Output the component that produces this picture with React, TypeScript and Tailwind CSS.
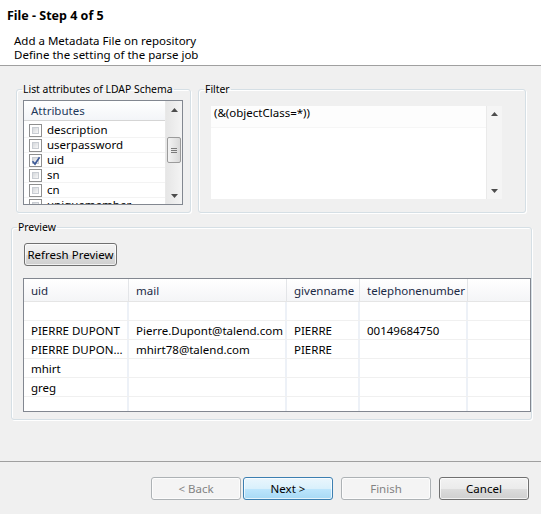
import React from 'react'

const attributes = [
  { name: 'description', checked: false },
  { name: 'userpassword', checked: false },
  { name: 'uid', checked: true },
  { name: 'sn', checked: false },
  { name: 'cn', checked: false },
  { name: 'uniquemember', checked: false },
]

const columns = [
  { title: 'uid', w: 'w-[105px]' },
  { title: 'mail', w: 'w-[158px]' },
  { title: 'givenname', w: 'w-[73px]' },
  { title: 'telephonenumber', w: 'w-[108px]' },
]

const rows = [
  ['', '', '', ''],
  ['PIERRE DUPONT', 'Pierre.Dupont@talend.com', 'PIERRE', '00149684750'],
  ['PIERRE DUPON...', 'mhirt78@talend.com', 'PIERRE', ''],
  ['mhirt', '', '', ''],
  ['greg', '', '', ''],
  ['', '', '', ''],
]

function Arrow({ down }: { down?: boolean }) {
  return (
    <svg width="7" height="4" viewBox="0 0 7 4">
      <path d={down ? 'M0 0H7L3.5 4Z' : 'M0 4H7L3.5 0Z'} fill="#4d4d4d" />
    </svg>
  )
}

function Checkbox({ checked }: { checked: boolean }) {
  return (
    <span className="relative w-[13px] h-[13px] border border-[#8f8f8f] bg-white p-[2px] shrink-0">
      <span className="block w-full h-full border border-[#c8ccd2] bg-linear-to-br from-[#d4d7db] to-[#f7f7f7]" />
      {checked && (
        <svg className="absolute left-[1px] top-[1px]" width="10" height="10" viewBox="0 0 10 10">
          <path d="M1.5 5.2L4 8L8.6 1.2" fill="none" stroke="#3d5a98" strokeWidth="1.7" />
        </svg>
      )}
    </span>
  )
}

function Group({ label, className, children }: { label: string, className: string, children: React.ReactNode }) {
  return (
    <fieldset className={`border border-[#d5dfe5] rounded-[3px] shadow-[inset_1px_1px_0_#fff,1px_1px_0_#fff] ${className}`}>
      <legend className="ml-[5px] px-[1px] leading-[15px] text-[10.4px]">{label}</legend>
      {children}
    </fieldset>
  )
}

const winButton = 'h-[23px] border rounded-[3px] flex items-center justify-center shadow-[inset_0_0_0_1px_rgba(255,255,255,0.7)]'
const normalButton = `${winButton} border-[#707070] bg-[linear-gradient(#f2f2f2_0%,#ebebeb_50%,#dddddd_50%,#cfcfcf_100%)]`
const disabledButton = `${winButton} border-[#adb2b5] bg-[#f4f4f4] text-[#838383]`
const defaultButton = `${winButton} border-[#3c7fb1] bg-[linear-gradient(#eaf6fd_0%,#d9f0fc_50%,#bee6fd_50%,#a7d9f5_100%)]`

export default function App() {
  return (
    <div className="w-[541px] h-[514px] bg-[#f0f0f0] flex flex-col overflow-hidden text-[11.5px] leading-[15px] text-black font-['Noto_Sans',sans-serif]">
      {/* wizard header */}
      <div className="h-[66px] shrink-0 bg-white border-b border-[#a0a0a0] pl-[7px] pt-[8px]">
        <div className="font-bold text-[12.5px] leading-[16px]">File - Step 4 of 5</div>
        <div className="pl-[7px] mt-[10px] leading-[14px]">
          <div>Add a Metadata File on repository</div>
          <div>Define the setting of the parse job</div>
        </div>
      </div>

      <div className="flex-1 flex flex-col pl-[11px]">
        <div className="mt-[16px] flex">
          <Group label="List attributes of LDAP Schema" className="ml-[5px] w-[175px] h-[131px]">
            <div className="ml-[6px] mt-[3px] w-[160px] h-[105px] border border-[#828790] bg-white flex overflow-hidden">
              <div className="flex-1 flex flex-col min-w-0">
                <div className="h-[20px] shrink-0 flex items-center pl-[7px] border-b border-[#d5d5d5] bg-linear-to-b from-white to-[#f3f5f8] text-[#1e395b]">
                  Attributes
                </div>
                <div className="pt-[2px] flex flex-col">
                  {attributes.map(a => (
                    <div key={a.name} className="h-[15px] shrink-0 flex items-center gap-[5px] pl-[5px] border-b border-[#f3f3f3]">
                      <Checkbox checked={a.checked} />
                      <span className="leading-[14px]">{a.name}</span>
                    </div>
                  ))}
                </div>
              </div>
              <div className="w-[17px] shrink-0 flex flex-col items-center bg-linear-to-r from-[#e6e6e6] to-[#f4f4f4] border-l border-[#e9e9e9]">
                <div className="h-[17px] flex items-center justify-center"><Arrow /></div>
                <div className="h-[19px]" />
                <div className="w-[14px] h-[26px] border border-[#9b9b9b] rounded-[2px] bg-linear-to-r from-[#f3f3f3] to-[#d9d9d9] flex flex-col items-center justify-center gap-[1px]">
                  <span className="w-[6px] h-px bg-[#7a7a7a]" />
                  <span className="w-[6px] h-px bg-[#7a7a7a]" />
                  <span className="w-[6px] h-px bg-[#7a7a7a]" />
                </div>
                <div className="flex-1" />
                <div className="h-[17px] flex items-center justify-center"><Arrow down /></div>
              </div>
            </div>
          </Group>

          <Group label="Filter" className="ml-[7px] w-[328px] h-[131px]">
            <div className="ml-[11px] mt-[8px] w-[293px] h-[95px] bg-white border border-[#f0f0f0] flex">
              <div className="flex-1">
                <div className="h-[22px] pl-[3px] leading-[14px] border-b border-[#f6f6f6] bg-[#fdfdfd]">(&amp;(objectClass=*))</div>
              </div>
              <div className="w-[16px] flex flex-col items-center justify-between py-[6px] bg-[#f5f5f5] border-l border-[#eaeaea]">
                <Arrow />
                <Arrow down />
              </div>
            </div>
          </Group>
        </div>

        <Group label="Preview" className="mt-[7px] w-[520px] h-[200px]">
          <button className={`${normalButton} ml-[12px] mt-[8px] w-[93px]`}>Refresh Preview</button>
          <div className="ml-[11px] mt-[12px] w-[508px] h-[134px] border border-[#828790] bg-white overflow-hidden">
            <div className="h-[23px] flex border-b border-[#e5e5e5] bg-linear-to-b from-white to-[#f4f5f7]">
              {columns.map(c => (
                <div key={c.title} className={`${c.w} shrink-0 flex items-center pl-[7px] border-r border-[#e3e5e8] text-[#1b2a45]`}>{c.title}</div>
              ))}
            </div>
            {rows.map((r, i) => (
              <div key={i} className="h-[19px] flex border-b border-[#f0f0f0]">
                {r.map((v, j) => (
                  <div key={j} className={`${columns[j].w} shrink-0 flex items-center pl-[7px] border-r-2 border-[#edf1f7] whitespace-nowrap overflow-hidden`}>{v}</div>
                ))}
              </div>
            ))}
          </div>
        </Group>
      </div>

      {/* wizard buttons */}
      <div className="h-[53px] shrink-0 border-t border-[#a0a0a0] pt-[15px] pr-[12px] flex justify-end">
        <button className={`${disabledButton} w-[90px]`}>&lt; Back</button>
        <button className={`${defaultButton} w-[90px] ml-[2px]`}>Next &gt;</button>
        <button className={`${disabledButton} w-[90px] ml-[8px]`}>Finish</button>
        <button className={`${normalButton} w-[90px] ml-[8px]`}>Cancel</button>
      </div>
    </div>
  )
}
